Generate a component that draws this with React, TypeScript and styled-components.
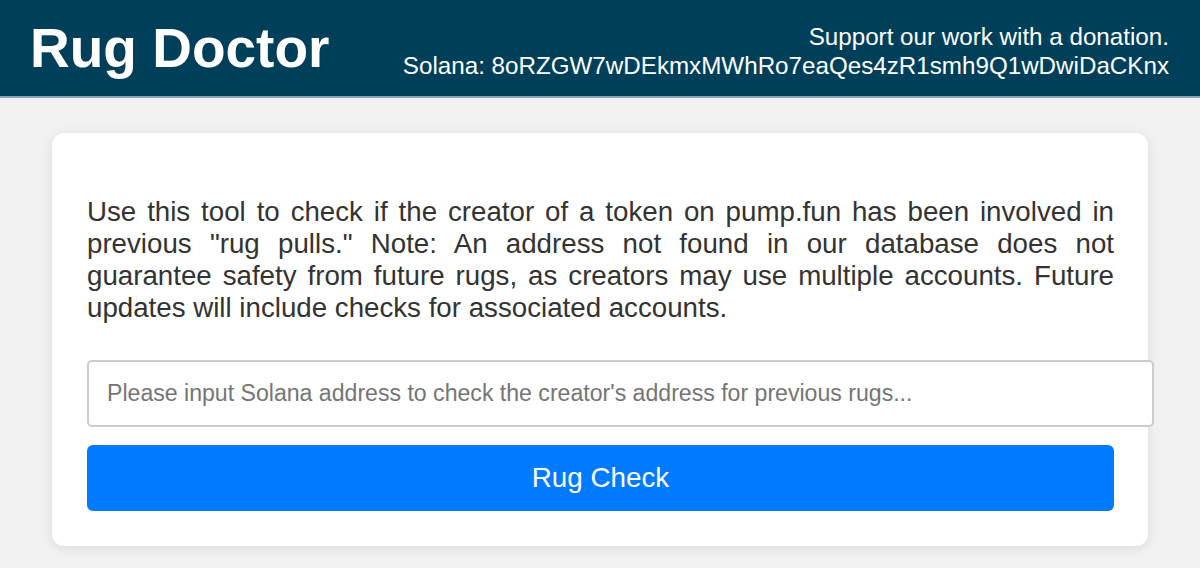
import React from 'react';
import styled, { createGlobalStyle } from 'styled-components';

const GlobalStyle = createGlobalStyle`
  body {
    margin: 0;
    background: #f2f2f2;
    font-family: "Liberation Sans", Arial, sans-serif;
  }
`;

function App() {
    return (
        <>
            <GlobalStyle />
            <Header>
                <Title>Rug Doctor</Title>
                <Donation>
                    <div>Support our work with a donation.</div>
                    <div>Solana: 8oRZGW7wDEkmxMWhRo7eaQes4zR1smh9Q1wDwiDaCKnx</div>
                </Donation>
            </Header>
            <Main>
                <Card>
                    <Intro>
                        Use this tool to check if the creator of a token on pump.fun has been involved in
                        previous "rug pulls." Note: An address not found in our database does not
                        guarantee safety from future rugs, as creators may use multiple accounts. Future
                        updates will include checks for associated accounts.
                    </Intro>
                    <AddressInput placeholder="Please input Solana address to check the creator's address for previous rugs..." />
                    <CheckBtn>Rug Check</CheckBtn>
                </Card>
            </Main>
        </>
    );
}

export default App;

const Header = styled.header`
  height: 96px;
  background: #003f5a;
  border-bottom: 2px solid #8aa3ae;
  display: flex;
  justify-content: space-between;
  align-items: center;
  padding: 0 31px 0 30px;
  color: #fff;
`

const Title = styled.h1`
  margin: 0;
  font-size: 55px;
  font-weight: bold;
`

const Donation = styled.div`
  text-align: right;
  font-size: 24.2px;
  line-height: 29px;
  padding-top: 5px;
`

const Main = styled.main`
  padding: 35px 52px 22px 52px;
`

const Card = styled.div`
  background: #fff;
  border-radius: 12px;
  box-shadow: 0 2px 12px rgba(0, 0, 0, 0.1);
  padding: 35px 34px 35px 35px;
`

const Intro = styled.p`
  margin: 28px 0 36px;
  font-size: 27.7px;
  line-height: 32px;
  color: #333;
  text-align: justify;
`

const AddressInput = styled.input`
  display: block;
  width: 100%;
  height: 63px;
  padding: 0 18px;
  border: 2px solid #ccc;
  border-radius: 5px;
  font-family: "Liberation Sans", Arial, sans-serif;
  font-size: 23.1px;
  color: #333;
  outline: none;

  &::placeholder {
    color: #757575;
  }
`

const CheckBtn = styled.button`
  display: block;
  width: 100%;
  margin-top: 18px;
  height: 66px;
  border: none;
  border-radius: 6px;
  background: #007bff;
  color: #fff;
  font-family: "Liberation Sans", Arial, sans-serif;
  font-size: 27.8px;
  cursor: pointer;
`
